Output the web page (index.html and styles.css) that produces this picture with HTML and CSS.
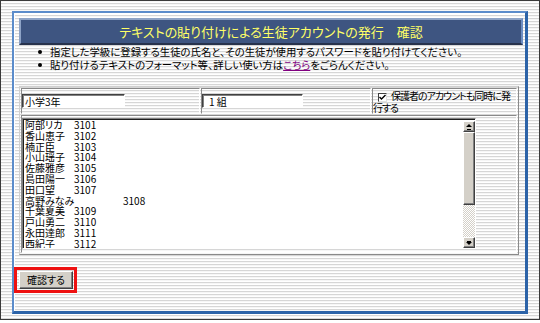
FILE: index.html
```html
<!DOCTYPE html>
<html lang="ja">

<head>
    <meta charset="UTF-8">
    <title>生徒アカウントの発行 確認</title>
    <link rel="stylesheet" href="styles.css">
</head>

<body>
    <div class="screen">
        <div class="frame">
            <div class="title">テキストの貼り付けによる生徒アカウントの発行　確認</div>
            <ul class="notes">
                <li>指定した学級に登録する生徒の氏名と、その生徒が使用するパスワードを貼り付けてください。</li>
                <li>貼り付けるテキストのフォーマット等、詳しい使い方は<a href="#">こちら</a>をごらんください。</li>
            </ul>
            <table class="form">
                <tr>
                    <td class="c1"><input class="box w1" type="text" value="小学3年"></td>
                    <td class="c2"><input class="box w2" type="text" value="1 組"></td>
                    <td class="c3"><span class="check"><svg width="7" height="7" viewBox="0 0 7 7"><path d="M0.5 3 L2.5 5 L6.5 1" fill="none" stroke="#000" stroke-width="1.4"/></svg></span>保護者のアカウントも同時に発<br>行する</td>
                </tr>
                <tr>
                    <td colspan="3" class="cell-memo">
                        <div class="memo">
                            <textarea class="memo-text">阿部リカ	3101
香山恵子	3102
楠正臣	3103
小山瑶子	3104
佐藤雅彦	3105
島田陽一	3106
田口望	3107
高野みなみ	3108
千葉夏美	3109
戸山勇二	3110
永田達郎	3111
西紀子	3112</textarea>
                            <div class="sbar">
                                <span class="sbtn up"></span>
                                <span class="thumb"></span>
                                <span class="track"></span>
                                <span class="sbtn down"></span>
                            </div>
                        </div>
                    </td>
                </tr>
            </table>
            <div class="mark"><button class="btn" type="button">確認する</button></div>
        </div>
    </div>
</body>

</html>
```
FILE: styles.css
```css
* {
    margin: 0;
    padding: 0;
    box-sizing: border-box;
}

body {
    font-family: "Noto Sans CJK JP", sans-serif;
    font-feature-settings: "palt";
    font-size: 10px;
    color: #000;
    background: #fff;
}

.screen {
    width: 540px;
    height: 320px;
    border: 1px solid #3a3a3a;
    padding: 10px 11px 0 11px;
    background: repeating-linear-gradient(#f6f6f6 0 1px, #fff 1px 2px, #d6d6d6 2px 3px);
}

.frame {
    width: 516px;
    height: 303px;
    border-style: solid;
    border-width: 2px 3px 3px 2px;
    border-color: #5b8ccb #2c63a8 #2c63a8 #5b8ccb;
    box-shadow: inset 1px 1px 0 #fff;
    padding-top: 5px;
}

.title {
    margin: 0 2px 0 5px;
    height: 27px;
    border-style: solid;
    border-width: 2px;
    border-color: #8ea3c6 #6d8dc2 #27324c #8ea3c6;
    background: #3e5581;
    color: #ffff66;
    font-size: 13px;
    line-height: 23px;
    text-align: center;
}

.notes {
    list-style: none;
    padding-left: 36px;
    font-size: 10.4px;
    line-height: 13px;
}

.notes li {
    position: relative;
}

.notes li::before {
    content: "";
    position: absolute;
    left: -12px;
    top: 5px;
    width: 4px;
    height: 4px;
    border-radius: 50%;
    background: #000;
}

.notes a {
    color: #800080;
}

.form {
    margin: 15px 0 0 5px;
    width: 500px;
    table-layout: fixed;
    border-collapse: separate;
    border-spacing: 1px;
    border: 1px solid;
    border-color: #d0d0d0 #8a8a8a #8a8a8a #d0d0d0;
}

.form td {
    border: 1px solid;
    border-color: #8a8a8a #fff #fff #8a8a8a;
    padding: 0;
}

.c1 {
    width: 179px;
    height: 25px;
}

.c2 {
    width: 170px;
}

.c3 {
    width: 145px;
    vertical-align: top;
    padding-top: 1px !important;
    line-height: 11px;
    letter-spacing: -1px;
    white-space: nowrap;
    overflow: hidden;
}

.box {
    height: 14px;
    border: 1px solid;
    border-color: #404040 #fff #fff #404040;
    box-shadow: inset 1px 1px 0 #808080;
    background: #fff;
    font: inherit;
    font-size: 10px;
    line-height: 12px;
    padding: 0 2px;
    outline: none;
}

.w1 {
    width: 103px;
}

.w2 {
    width: 101px;
    padding-left: 6px;
}

.check {
    display: inline-block;
    width: 9px;
    height: 9px;
    margin: 0 4px 0 5px;
    border: 1px solid;
    border-color: #404040 #e0e0e0 #e0e0e0 #404040;
    background: #fff;
    vertical-align: -1px;
    line-height: 0;
}

.cell-memo {
    height: 138px;
    vertical-align: top;
    padding-top: 2px !important;
}

.memo {
    display: flex;
    width: 454px;
    height: 131px;
    border: 1px solid;
    border-color: #808080 #fff #fff #808080;
    box-shadow: inset 1px 1px 0 #202020;
    background: #fff;
    padding: 1px 0 0 1px;
}

.memo-text {
    flex: 1;
    border: none;
    resize: none;
    overflow: hidden;
    outline: none;
    background: transparent;
    font: inherit;
    font-size: 10px;
    line-height: 10.8px;
    tab-size: 49px;
    padding: 0 1px;
    white-space: pre;
}

.sbar {
    width: 12px;
    display: flex;
    flex-direction: column;
    margin-top: 1px;
}

.sbtn,
.thumb {
    display: block;
    background: #d4d0c8;
    border: 1px solid;
    border-color: #fff #404040 #404040 #fff;
    box-shadow: inset -1px -1px 0 #808080;
}

.sbtn {
    height: 11px;
    position: relative;
}

.sbtn::after {
    content: "";
    position: absolute;
    left: 2px;
    width: 0;
    height: 0;
    border-left: 3px solid transparent;
    border-right: 3px solid transparent;
}

.up::after {
    top: 2px;
    border-bottom: 3px solid #000;
    box-shadow: 0 4px 0 -1px #000;
}

.down::after {
    top: 4px;
    border-top: 3px solid #000;
    box-shadow: 0 -2px 0 -1px #000;
}

.thumb {
    height: 73px;
}

.track {
    flex: 1;
    background: repeating-conic-gradient(#d4d0c8 0 25%, #fff 0 50%) 0 0 / 2px 2px;
}

.mark {
    display: inline-block;
    margin-top: 12px;
    border: 3px solid #ee1111;
    padding: 1px 1px 1px 2px;
}

.btn {
    display: block;
    width: 54px;
    height: 18px;
    background: #d4d0c8;
    border: 1px solid;
    border-color: #fff #404040 #404040 #fff;
    box-shadow: inset -1px -1px 0 #808080;
    font: inherit;
    font-size: 10px;
    line-height: 14px;
}
```
